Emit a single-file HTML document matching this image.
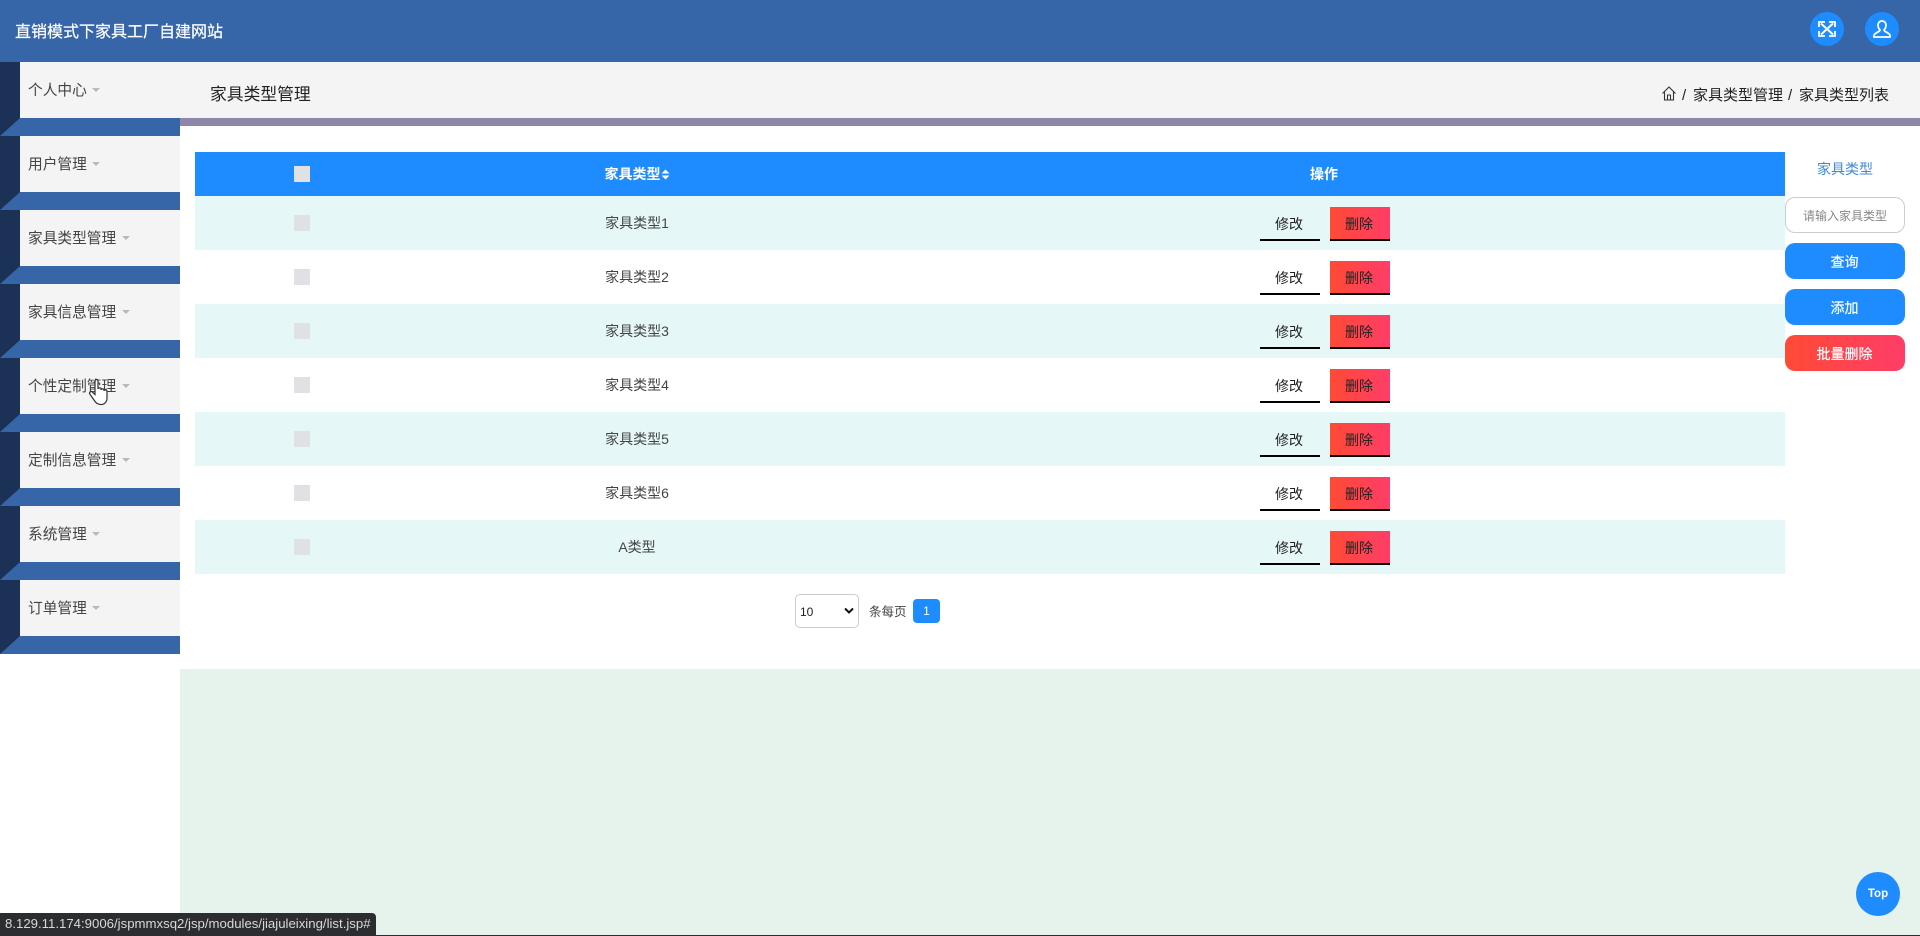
<!DOCTYPE html>
<html lang="zh">
<head>
<meta charset="utf-8">
<title>家具类型管理</title>
<style>
*{box-sizing:border-box;margin:0;padding:0}
html,body{width:1920px;height:936px;overflow:hidden;background:#fff;font-family:"Liberation Sans","Noto Sans CJK SC",sans-serif;}
.a{position:absolute}
.c{display:flex;align-items:center;justify-content:center;white-space:nowrap}
#hd{left:0;top:0;width:1920px;height:62px;background:#3665a8}
#title{left:15px;top:20px;font-size:16px;line-height:26px;color:#fff;white-space:nowrap;-webkit-text-stroke:.2px #fff}
.circle{width:34px;height:34px;border-radius:50%;background:#1e8cff;top:12px}
#strip{left:0;top:62px;width:20px;height:592px;background:#1b3155}
.li{left:20px;width:160px;height:56px;background:#f4f4f5}
.bar{left:0;width:180px;height:18px;background:#3665a8;clip-path:polygon(20px 0,180px 0,180px 18px,0 18px)}
.lt{left:28px;font-size:14.7px;line-height:20px;color:#444;white-space:nowrap}
.caret{width:0;height:0;border-left:4px solid transparent;border-right:4px solid transparent;border-top:4px solid #b8b8b8}
#crumb{left:180px;top:62px;width:1740px;height:56px;background:#f4f4f4}
#pur{left:180px;top:118px;width:1740px;height:8px;background:#8d86a9}
#green{left:180px;top:669px;width:1740px;height:267px;background:#e6f3ed}
#th{left:195px;top:152px;width:1590px;height:44px;background:#1e8cff}
.row{left:195px;width:1590px;height:54px}
.cb{left:294px;width:16px;height:16px;background:#dfe1e4}
.tt{left:499px;width:276px;height:20px;font-size:14px;color:#444}
.b1,.b2{height:34px;width:60px;font-size:14px;color:#222;border-bottom:2px solid #000;padding:2px 2px 0 0}
.b1{left:1260px}
.b2{left:1330px;background:linear-gradient(90deg,#ff4a35,#ff3d68)}
.btn{left:1785px;width:120px;height:36px;border-radius:10px;background:#1e8cff;color:#fff;font-size:14px;padding:2px 1px 0 0;-webkit-text-stroke:.2px #fff}
.bc{top:85px;font-size:15px;line-height:22px;color:#222;white-space:nowrap}
</style>
</head>
<body>
<div class="a" id="hd"></div>
<div class="a" id="title">直销模式下家具工厂自建网站</div>
<div class="a circle c" style="left:1810px"><svg width="18" height="16" viewBox="0 0 18 16" fill="none" stroke="#fff" stroke-width="2"><path d="M3 2.500L15 13.500M15 2.500L3 13.500"/><path d="M1 6V1H7M11 1H17V6M17 10V15H11M7 15H1V10" stroke-width="1.800"/></svg></div>
<div class="a circle c" style="left:1865px"><svg width="20" height="20" viewBox="0 0 20 20" fill="none" stroke="#fff" stroke-width="1.8"><path d="M10 2C7.4 2 6 4 6 6.3C6 8.5 7 10 8 11C8 13 2.5 13.5 2 16.5V18H18V16.5C17.500 13.500 12 13 12 11C13 10 14 8.500 14 6.300C14 4 12.600 2 10 2Z"/></svg></div>

<div class="a" id="strip"></div>
<div class="a li" style="top:62px"></div><div class="a bar" style="top:118px"></div>
<div class="a li" style="top:136px"></div><div class="a bar" style="top:192px"></div>
<div class="a li" style="top:210px"></div><div class="a bar" style="top:266px"></div>
<div class="a li" style="top:284px"></div><div class="a bar" style="top:340px"></div>
<div class="a li" style="top:358px"></div><div class="a bar" style="top:414px"></div>
<div class="a li" style="top:432px"></div><div class="a bar" style="top:488px"></div>
<div class="a li" style="top:506px"></div><div class="a bar" style="top:562px"></div>
<div class="a li" style="top:580px"></div><div class="a bar" style="top:636px"></div>

<div class="a lt" style="top:81px">个人中心</div><div class="a caret" style="left:92px;top:88px"></div>
<div class="a lt" style="top:155px">用户管理</div><div class="a caret" style="left:92px;top:162px"></div>
<div class="a lt" style="top:229px">家具类型管理</div><div class="a caret" style="left:122px;top:236px"></div>
<div class="a lt" style="top:303px">家具信息管理</div><div class="a caret" style="left:122px;top:310px"></div>
<div class="a lt" style="top:377px">个性定制管理</div><div class="a caret" style="left:122px;top:384px"></div>
<div class="a lt" style="top:451px">定制信息管理</div><div class="a caret" style="left:122px;top:458px"></div>
<div class="a lt" style="top:525px">系统管理</div><div class="a caret" style="left:92px;top:532px"></div>
<div class="a lt" style="top:599px">订单管理</div><div class="a caret" style="left:92px;top:606px"></div>

<div class="a" id="crumb"></div>
<div class="a" id="pur"></div>
<div class="a" id="green"></div>
<div class="a" style="left:210px;top:84px;font-size:16.8px;line-height:22px;color:#222;white-space:nowrap">家具类型管理</div>
<svg class="a" style="left:1662px;top:86px" width="14" height="15" viewBox="0 0 14 15" fill="none" stroke="#333" stroke-width="1.1"><path d="M0.500 7.500L7 1L13.500 7.500M2.500 6V14H11.500V6M5.500 14V9H8.500V14"/></svg>
<div class="a bc" style="left:1682px">/</div>
<div class="a bc" style="left:1693px">家具类型管理</div>
<div class="a bc" style="left:1788px">/</div>
<div class="a bc" style="left:1799px">家具类型列表</div>

<div class="a" id="th"></div>
<div class="a cb" style="top:166px"></div>
<div class="a c" style="left:499px;top:164px;width:276px;height:20px;font-size:14px;font-weight:bold;color:#fff">家具类型<svg width="9" height="11" viewBox="0 0 9 11" fill="#fff"><path d="M4.500 0.500L8.500 4.500H0.500ZM4.500 10.500L0.500 6.500H8.500Z"/></svg></div>
<div class="a c" style="left:1199px;top:164px;width:250px;height:20px;font-size:14px;font-weight:bold;color:#fff">操作</div>

<div class="a row" style="top:196px;background:#e5f8f7"></div>
<div class="a row" style="top:304px;background:#e5f8f7"></div>
<div class="a row" style="top:412px;background:#e5f8f7"></div>
<div class="a row" style="top:520px;background:#e5f8f7"></div>

<div class="a cb" style="top:215px"></div><div class="a cb" style="top:269px"></div><div class="a cb" style="top:323px"></div><div class="a cb" style="top:377px"></div><div class="a cb" style="top:431px"></div><div class="a cb" style="top:485px"></div><div class="a cb" style="top:539px"></div>

<div class="a tt c" style="top:213px">家具类型1</div>
<div class="a tt c" style="top:267px">家具类型2</div>
<div class="a tt c" style="top:321px">家具类型3</div>
<div class="a tt c" style="top:375px">家具类型4</div>
<div class="a tt c" style="top:429px">家具类型5</div>
<div class="a tt c" style="top:483px">家具类型6</div>
<div class="a tt c" style="top:537px">A类型</div>

<div class="a b1 c" style="top:207px">修改</div><div class="a b2 c" style="top:207px">删除</div>
<div class="a b1 c" style="top:261px">修改</div><div class="a b2 c" style="top:261px">删除</div>
<div class="a b1 c" style="top:315px">修改</div><div class="a b2 c" style="top:315px">删除</div>
<div class="a b1 c" style="top:369px">修改</div><div class="a b2 c" style="top:369px">删除</div>
<div class="a b1 c" style="top:423px">修改</div><div class="a b2 c" style="top:423px">删除</div>
<div class="a b1 c" style="top:477px">修改</div><div class="a b2 c" style="top:477px">删除</div>
<div class="a b1 c" style="top:531px">修改</div><div class="a b2 c" style="top:531px">删除</div>

<div class="a c" style="left:1785px;top:158px;width:120px;height:22px;font-size:14px;color:#3d88dc">家具类型</div>
<div class="a c" style="left:1785px;top:197px;width:120px;height:36px;border:1px solid #ccc;border-radius:10px;background:#fff;font-size:12px;color:#888">请输入家具类型</div>
<div class="a btn c" style="top:243px">查询</div>
<div class="a btn c" style="top:289px">添加</div>
<div class="a btn c" style="top:335px;background:linear-gradient(90deg,#ff4a35,#ff3d68)">批量删除</div>

<div class="a" style="left:795px;top:594px;width:64px;height:34px;border:1px solid #ccc;border-radius:5px;background:#fff"></div>
<div class="a" style="left:800px;top:603px;font-size:12px;line-height:18px;color:#222">10</div>
<svg class="a" style="left:844px;top:607px" width="10" height="8" viewBox="0 0 10 8" fill="none" stroke="#111" stroke-width="2"><path d="M1 1.500L5 5.500L9 1.500"/></svg>
<div class="a" style="left:869px;top:603px;font-size:12.500px;line-height:18px;color:#444;white-space:nowrap">条每页</div>
<div class="a c" style="left:913px;top:599px;width:27px;height:24px;border-radius:4px;background:#1e8cff;color:#fff;font-size:12px">1</div>

<div class="a c" style="left:1856px;top:872px;width:44px;height:44px;border-radius:50%;background:#1e8cff;color:#fff;font-size:11.5px;font-weight:bold">Top</div>

<div class="a" style="left:0;top:935px;width:1920px;height:1px;background:#2b2d31"></div>
<div class="a" style="left:0;top:913px;width:376px;height:23px;background:#2b2d31;border-radius:0 4px 0 0;color:#d9d9d9;font-size:13.2px;line-height:22px;padding-left:5px;white-space:nowrap">8.129.11.174:9006/jspmmxsq2/jsp/modules/jiajuleixing/list.jsp#</div>

<svg class="a" style="left:88px;top:378px" width="22" height="28" viewBox="0 0 22 28" fill="#fff" stroke="#333" stroke-width="1.200"><path d="M7 3C7 1 10 1 10 3V11C10 9.500 13 9.500 13 11V12C13 10.500 16 10.500 16 12V13C16 11.500 19 11.500 19 13.500V20C19 24 16.500 26.500 13 26.500C9.500 26.500 8 25 6 22L1.800 16C0.800 14.500 2.800 12.800 4.300 14L7 16.500Z"/></svg>
</body>
</html>
